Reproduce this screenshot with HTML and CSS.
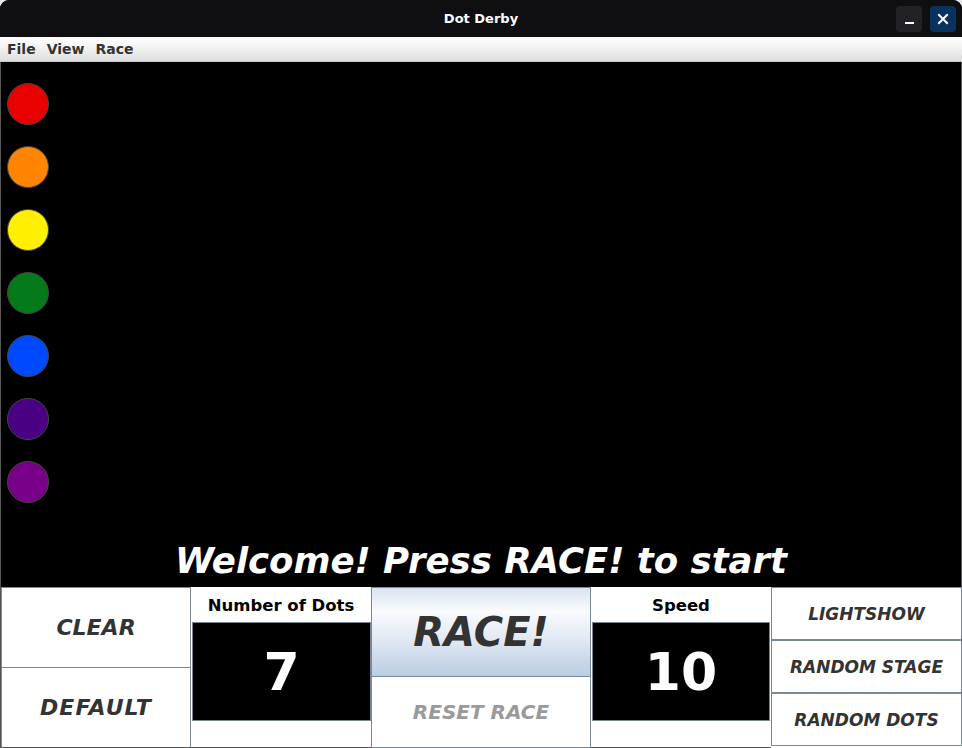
FILE: index.html
```html
<!DOCTYPE html>
<html>
<head>
<meta charset="utf-8">
<title>Dot Derby</title>
<link rel="stylesheet" href="styles.css">
</head>
<body>
<div class="window">
  <div class="titlebar">
    <span class="title">Dot Derby</span>
    <div class="winbtns">
      <div class="winbtn min"><svg width="26" height="26" viewBox="0 0 26 26"><rect x="9" y="16" width="9" height="2" fill="#fff"/></svg></div>
      <div class="winbtn close"><svg width="26" height="26" viewBox="0 0 26 26"><path d="M9 9 L17 17 M17 9 L9 17" stroke="#fff" stroke-width="2" stroke-linecap="square"/></svg></div>
    </div>
  </div>
  <div class="menubar">
    <span class="menu">File</span>
    <span class="menu">View</span>
    <span class="menu">Race</span>
  </div>
  <div class="canvas">
    <div class="dots">
      <div class="dot red"></div>
      <div class="dot orange"></div>
      <div class="dot yellow"></div>
      <div class="dot green"></div>
      <div class="dot blue"></div>
      <div class="dot indigo"></div>
      <div class="dot violet"></div>
    </div>
    <div class="welcome">Welcome! Press RACE! to start</div>
  </div>
  <div class="controls">
    <div class="col col1">
      <div class="btn big">CLEAR</div>
      <div class="btn big wide">DEFAULT</div>
    </div>
    <div class="col col2">
      <div class="label">Number of Dots</div>
      <div class="display">7</div>
      <div class="fill"></div>
    </div>
    <div class="col col3">
      <div class="btn race">RACE!</div>
      <div class="btn reset">RESET RACE</div>
    </div>
    <div class="col col4">
      <div class="label">Speed</div>
      <div class="display">10</div>
      <div class="fill"></div>
    </div>
    <div class="col col5">
      <div class="btn small">LIGHTSHOW</div>
      <div class="btn small">RANDOM STAGE</div>
      <div class="btn small">RANDOM DOTS</div>
    </div>
  </div>
</div>
</body>
</html>
```

FILE: styles.css
```css
* { box-sizing: border-box; }
html, body {
  margin: 0;
  padding: 0;
  background: #e8e8e8;
}
body {
  font-family: "DejaVu Sans", "Liberation Sans", sans-serif;
  width: 962px;
  height: 748px;
  overflow: hidden;
}
.window {
  width: 962px;
  height: 748px;
  display: flex;
  flex-direction: column;
  background: #000;
  border-radius: 9px 9px 0 0;
  overflow: hidden;
}
.titlebar {
  height: 37px;
  flex: none;
  background: #0f0f12;
  display: flex;
  align-items: center;
  justify-content: center;
  position: relative;
}
.title {
  color: #fff;
  font-weight: bold;
  font-size: 13px;
}
.winbtns {
  position: absolute;
  right: 6px;
  top: 6px;
  display: flex;
  gap: 8px;
}
.winbtn {
  width: 26px;
  height: 26px;
  border-radius: 4px;
}
.winbtn svg { display: block; }
.winbtn.min { background: #222226; }
.winbtn.close { background: #08335f; }
.menubar {
  height: 25px;
  flex: none;
  background: linear-gradient(#ffffff, #f4f4f4 40%, #dedede);
  border-bottom: 1px solid #c8c8c8;
  display: flex;
  align-items: center;
  padding-left: 7px;
  gap: 11px;
}
.menu {
  font-size: 14px;
  font-weight: bold;
  color: #333;
}
.canvas {
  height: 525px;
  flex: none;
  background: #000;
  border-left: 1px solid #555;
  border-right: 1px solid #555;
  display: flex;
  flex-direction: column;
}
.dots {
  display: flex;
  flex-direction: column;
  gap: 21px;
  padding-top: 21px;
  padding-left: 6px;
}
.dot {
  width: 42px;
  height: 42px;
  border-radius: 50%;
  border: 1px solid #444;
}
.red { background: #e80000; }
.orange { background: #ff8500; }
.yellow { background: #ffef00; }
.green { background: #057a1b; }
.blue { background: #0049ff; }
.indigo { background: #4a0082; }
.violet { background: #780088; }
.welcome {
  margin-top: auto;
  text-align: center;
  color: #fff;
  font-weight: bold;
  font-style: oblique;
  font-size: 35.5px;
  line-height: 40px;
  padding-bottom: 6px;
}
.controls {
  height: 161px;
  flex: none;
  display: flex;
  background: #fff;
  border-left: 1px solid #555;
}
.col {
  display: flex;
  flex-direction: column;
  background: #fff;
}
.col1 { width: 190px; }
.col2 { width: 180px; }
.col3 { width: 220px; }
.col4 { width: 180px; }
.col5 { width: 191px; padding-bottom: 2px; }
.btn {
  flex: 1;
  display: flex;
  align-items: center;
  justify-content: center;
  border: 1px solid #7a8897;
  background: #fff;
  color: #333;
  font-weight: bold;
  font-style: oblique;
}
.col1 .btn + .btn, .col3 .btn + .btn { border-top: none; }
.col1 .btn:last-child { border-bottom-color: #555; }
.big { font-size: 22px; }
.wide { letter-spacing: 1px; }
.race {
  flex: none;
  height: 90px;
  font-size: 40px;
  background: linear-gradient(#d9e3f0 0%, #f9fbfd 26%, #e4ebf4 55%, #b9cde3 100%);
}
.reset {
  font-size: 20px;
  color: #9a9a9a;
}
.small {
  font-size: 17px;
  flex: none;
  height: 53px;
}
.label {
  height: 35px;
  flex: none;
  display: flex;
  align-items: center;
  justify-content: center;
  font-size: 16.5px;
  font-weight: bold;
  color: #000;
  padding-top: 1px;
}
.display {
  height: 99px;
  flex: none;
  margin-left: 1px;
  background: #000;
  border: 1px solid #7a8897;
  color: #fff;
  font-weight: bold;
  font-size: 52px;
  display: flex;
  align-items: center;
  justify-content: center;
}
.col4 .display { margin-right: 1px; }
.fill {
  flex: 1;
  border-bottom: 1px solid #555;
}
```
